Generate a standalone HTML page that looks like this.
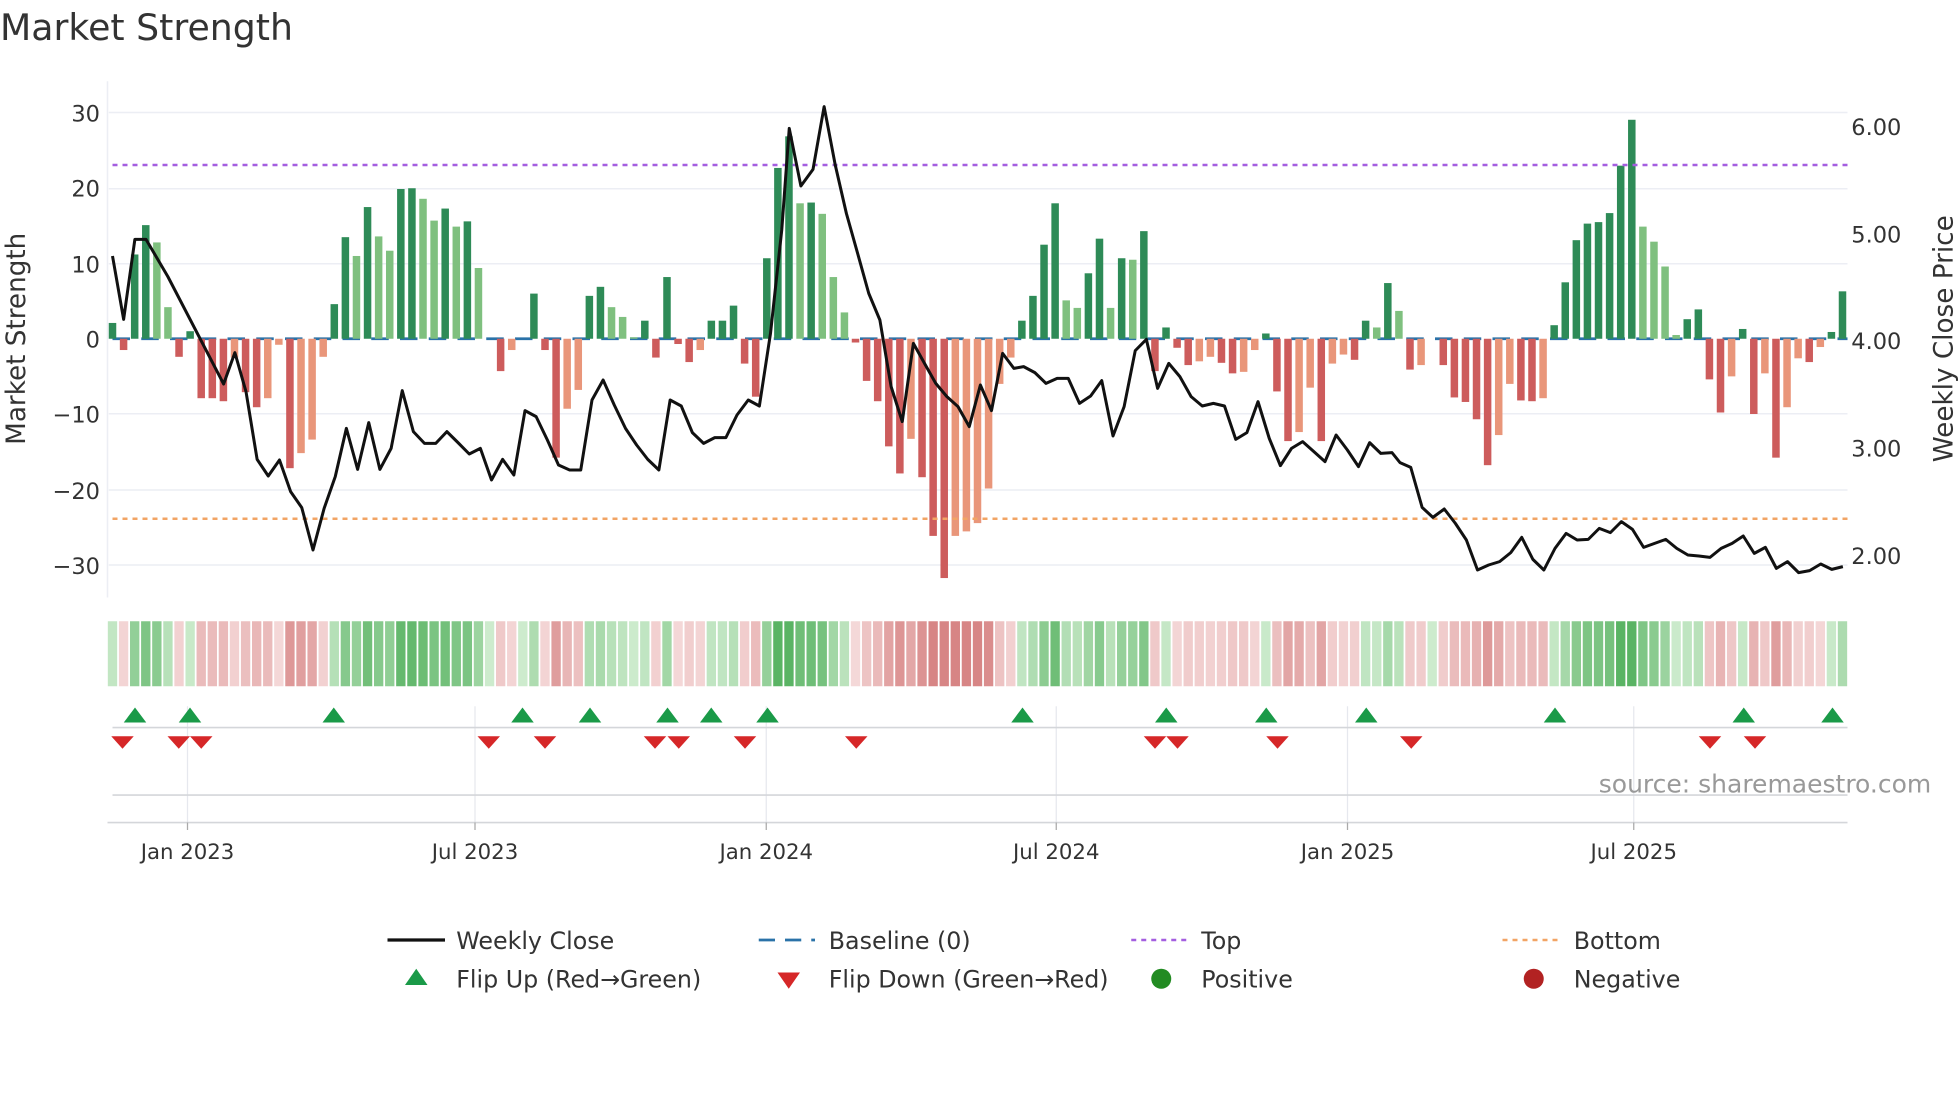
<!DOCTYPE html>
<html><head><meta charset="utf-8">
<style>
html,body{margin:0;padding:0;background:#fff;}
svg{display:block;}
text{font-family:"DejaVu Sans","Liberation Sans",sans-serif;fill:#333;}
</style></head>
<body>
<svg id="c" xmlns="http://www.w3.org/2000/svg" width="1960" height="1102" viewBox="0 0 1568 881.6">
<rect width="1568" height="882" fill="#fff"/>
<text x="0" y="32" font-size="29">Market Strength</text>
<g stroke="#eceef4" stroke-width="1.2">
<line x1="87" x2="1478" y1="90" y2="90"/><line x1="87" x2="1478" y1="151" y2="151"/>
<line x1="87" x2="1478" y1="211" y2="211"/><line x1="87" x2="1478" y1="331" y2="331"/>
<line x1="87" x2="1478" y1="392" y2="392"/><line x1="87" x2="1478" y1="452" y2="452"/>
<line x1="86" x2="86" y1="65" y2="478"/>
</g>
<g font-size="18" text-anchor="end">
<text x="80" y="97">30</text><text x="80" y="157">20</text><text x="80" y="218">10</text>
<text x="80" y="278">0</text><text x="80" y="338">−10</text><text x="80" y="399">−20</text><text x="80" y="459">−30</text>
</g>
<g font-size="18">
<text x="1481" y="108">6.00</text><text x="1481" y="194">5.00</text><text x="1481" y="279">4.00</text>
<text x="1481" y="365">3.00</text><text x="1481" y="451">2.00</text>
</g>
<text transform="translate(20,271) rotate(-90)" font-size="21" text-anchor="middle">Market Strength</text>
<text transform="translate(1562,271) rotate(-90)" font-size="21" text-anchor="middle">Weekly Close Price</text>
<line x1="90" x2="1478" y1="271" y2="271" stroke="#2a72a8" stroke-width="2.2" stroke-dasharray="14,9"/>
<g id="bars"></g>
<line x1="90" x2="1478" y1="132" y2="132" stroke="#a45ee0" stroke-width="2" stroke-dasharray="4,4"/>
<line x1="90" x2="1478" y1="415" y2="415" stroke="#f2a464" stroke-width="2" stroke-dasharray="4,4"/>
<polyline id="price" fill="none" stroke="#111" stroke-width="2.4" stroke-linejoin="round"/>
<g id="heat"></g>
<g stroke="#e6e8ee" stroke-width="1">
<line x1="150" x2="150" y1="565" y2="660"/><line x1="380" x2="380" y1="565" y2="660"/>
<line x1="613" x2="613" y1="565" y2="660"/><line x1="845" x2="845" y1="565" y2="660"/>
<line x1="1078" x2="1078" y1="565" y2="660"/><line x1="1307" x2="1307" y1="565" y2="660"/>
</g>
<line x1="90" x2="1478" y1="582" y2="582" stroke="#d4d6da" stroke-width="1.3"/>
<line x1="90" x2="1478" y1="636" y2="636" stroke="#d4d6da" stroke-width="1.3"/>
<line x1="86" x2="1478" y1="658" y2="658" stroke="#d4d6da" stroke-width="1.3"/>
<g stroke="#aaa" stroke-width="1">
<line x1="150" x2="150" y1="658" y2="664"/><line x1="380" x2="380" y1="658" y2="664"/>
<line x1="613" x2="613" y1="658" y2="664"/><line x1="845" x2="845" y1="658" y2="664"/>
<line x1="1078" x2="1078" y1="658" y2="664"/><line x1="1307" x2="1307" y1="658" y2="664"/>
</g>
<g id="marks"></g>
<text x="1545" y="634" font-size="20" text-anchor="end" style="fill:#999">source: sharemaestro.com</text>
<g font-size="17" text-anchor="middle">
<text x="150" y="687">Jan 2023</text><text x="380" y="687">Jul 2023</text><text x="613" y="687">Jan 2024</text>
<text x="845" y="687">Jul 2024</text><text x="1078" y="687">Jan 2025</text><text x="1307" y="687">Jul 2025</text>
</g>
<g font-size="19">
<line x1="310" x2="356" y1="752" y2="752" stroke="#111" stroke-width="2.6"/>
<text x="365" y="759">Weekly Close</text>
<line x1="607" x2="652" y1="752" y2="752" stroke="#2a72a8" stroke-width="2.2" stroke-dasharray="13,8"/>
<text x="663" y="759">Baseline (0)</text>
<line x1="905" x2="950" y1="752" y2="752" stroke="#a45ee0" stroke-width="2" stroke-dasharray="4,4"/>
<text x="961" y="759">Top</text>
<line x1="1202" x2="1247" y1="752" y2="752" stroke="#f2a464" stroke-width="2" stroke-dasharray="4,4"/>
<text x="1259" y="759">Bottom</text>
<polygon points="324,788 342,788 333,775" fill="#1a9a48"/>
<text x="365" y="790">Flip Up (Red→Green)</text>
<polygon points="622,778 640,778 631,791" fill="#d62728"/>
<text x="663" y="790">Flip Down (Green→Red)</text>
<circle cx="929" cy="783" r="8" fill="#228b22"/>
<text x="961" y="790">Positive</text>
<circle cx="1227" cy="783" r="8" fill="#b22222"/>
<text x="1259" y="790">Negative</text>
</g>
</svg>
<script>
(function(){
var NS="http://www.w3.org/2000/svg";
var d="D2.1 R-1.5 D11.2 D15.1 L12.8 L4.2 R-2.4 D1 R-7.9 R-7.9 R-8.3 S-2.5 R-7.1 R-9.1 S-7.9 S-0.8 R-17.2 S-15.2 S-13.4 S-2.4 D4.6 D13.5 L11 D17.5 L13.6 L11.7 D19.9 D20 L18.6 L15.7 D17.3 L14.9 D15.6 L9.4 D0 R-4.3 S-1.5 D0 D6 R-1.5 R-15.8 S-9.3 S-6.8 D5.7 D6.9 L4.2 L2.9 L0.2 D2.4 R-2.5 D8.2 R-0.7 R-3.1 S-1.5 D2.4 D2.4 D4.4 R-3.3 R-7.7 D10.7 D22.7 D26.9 L18 D18.1 L16.6 L8.2 L3.5 R-0.5 R-5.6 R-8.3 R-14.3 R-17.9 S-13.3 R-18.4 R-26.2 R-31.8 S-26.2 S-25.6 S-24.5 S-19.9 S-6 S-2.5 D2.4 D5.7 D12.5 D18 L5.1 L4.1 D8.7 D13.3 L4.1 D10.7 L10.5 D14.3 R-4.3 D1.5 R-1.2 R-3.5 S-3 S-2.4 R-3.2 R-4.6 S-4.4 S-1.5 D0.7 R-7 R-13.6 S-12.4 S-6.5 R-13.6 S-3.3 S-2.1 R-2.8 D2.4 L1.5 D7.4 L3.7 R-4.1 S-3.5 D0 R-3.5 R-7.8 R-8.4 R-10.7 R-16.8 S-12.8 S-6 R-8.2 R-8.3 S-7.9 D1.8 D7.5 D13.1 D15.3 D15.5 D16.7 D23 D29.1 L14.9 L12.9 L9.6 L0.5 D2.6 D3.9 R-5.4 R-9.8 S-5 D1.3 R-10 S-4.6 R-15.8 S-9.1 S-2.6 R-3.1 S-1.1 D0.9 D6.3".split(" ");
var col={D:"#2e8b57",L:"#7fc07f",R:"#cd5c5c",S:"#e9967a"};
var bars=document.getElementById("bars"),heat=document.getElementById("heat");
var step=(1474-90)/156;
for(var i=0;i<d.length;i++){
 var c=d[i][0],v=parseFloat(d[i].slice(1));var x=90+i*step;
 var h=Math.abs(v)*6.02;
 if(h>0.3){var r=document.createElementNS(NS,"rect");
 r.setAttribute("x",(x-3).toFixed(2));r.setAttribute("width","6");
 r.setAttribute("y",(v>0?271-h:271).toFixed(2));r.setAttribute("height",h.toFixed(2));
 r.setAttribute("fill",col[c]);bars.appendChild(r);}
 var t=Math.min(Math.abs(v)/22,1),rgb;
 if(v>=0){rgb=[205-115*t,235-55*t,205-105*t];}else{rgb=[245-30*t,218-85*t,218-85*t];}
 var h2=document.createElementNS(NS,"rect");
 h2.setAttribute("x",(x-step/2+0.7).toFixed(2));h2.setAttribute("width",(step-1.4).toFixed(2));
 h2.setAttribute("y","497");h2.setAttribute("height","52");
 h2.setAttribute("fill","rgb("+rgb.map(Math.round).join(",")+")");heat.appendChild(h2);
}
var z1=[[28,528],[53,718],[78,478],[103,478],[152,590],[277,912],[302,818],[327,935],[352,1138],[377,1188],[402,1140],[427,1235],[452,1283],[477,1410],[502,1285],[527,1190],[552,1045],[577,1168],[602,1028],[627,1168],[652,1105],[677,932],[702,1055],[727,1090],[752,1090],[777,1055],[802,1088],[827,1122],[852,1105],[877,1200],[902,1138],[927,1185],[952,992],[977,1010],[1002,1080],[1027,1155],[1052,1170],[1077,1170],[1102,960],[1127,900],[1152,975],[1177,1045],[1202,1095],[1227,1138],[1252,1170],[1277,960],[1302,978],[1327,1058],[1352,1090],[1377,1073],[1402,1073],[1427,1005],[1452,960],[1477,978],[1502,760],[1527,450]];
var z2=[[-38,145],[-12,318],[15,268],[40,80],[65,255],[90,400],[115,520],[140,640],[165,720],[190,920],[215,1025],[240,790],[265,850],[290,910],[315,950],[340,980],[365,1040],[390,915],[415,992],[440,820],[465,865],[487,860],[512,878],[537,910],[562,895],[587,895],[612,970],[637,948],[662,902],[687,1068],[712,980],[737,812],[762,778],[787,925],[812,850],[837,890],[862,950],[887,978],[912,970],[937,978],[962,1078],[987,1058],[1012,965],[1037,1075],[1062,1157],[1087,1105],[1112,1085],[1137,1115],[1162,1145],[1187,1065],[1212,1110],[1237,1160],[1262,1088],[1287,1120],[1312,1118]];
var z3=[[0,1148],[30,1162],[62,1282],[92,1312],[124,1287],[155,1330],[186,1380],[217,1470],[248,1455],[279,1445],[310,1418],[341,1372],[372,1438],[403,1470],[434,1405],[465,1360],[496,1380],[527,1378],[558,1345],[589,1358],[620,1325],[651,1348],[682,1402],[713,1390],[744,1378],[775,1405],[806,1425],[837,1428],[868,1432],[899,1405],[930,1390],[961,1368],[992,1420],[1023,1402],[1054,1465],[1085,1445],[1116,1478],[1147,1472],[1178,1452],[1209,1468],[1240,1460]];
var pts=[];
z1.forEach(function(p){pts.push([80+p[0]/2.8,64+p[1]/3.75]);});
z2.forEach(function(p){pts.push([645+p[0]/2.8,64+p[1]/3.75]);});
z3.forEach(function(p){pts.push([1120+p[0]/3.5,64+p[1]/3.75]);});
pts.sort(function(a,b){return a[0]-b[0];});
document.getElementById("price").setAttribute("points",pts.map(function(p){return p[0].toFixed(1)+","+p[1].toFixed(1);}).join(" "));
var m=document.getElementById("marks");
[108,152,267,418,472,534,569,614,818,933,1013,1093,1244,1395,1466].forEach(function(x){
 var p=document.createElementNS(NS,"polygon");p.setAttribute("points",(x-9)+",578 "+(x+9)+",578 "+x+",566");p.setAttribute("fill","#1a9a48");m.appendChild(p);});
[98,143,161,391,436,524,543,596,685,924,942,1022,1129,1368,1404].forEach(function(x){
 var p=document.createElementNS(NS,"polygon");p.setAttribute("points",(x-9)+",589 "+(x+9)+",589 "+x+",599");p.setAttribute("fill","#d62728");m.appendChild(p);});
})();
</script>
</body></html>
